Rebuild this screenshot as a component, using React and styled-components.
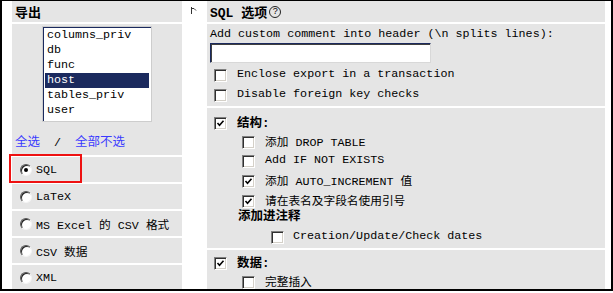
import styled, { createGlobalStyle } from "styled-components"

const Tables = ["columns_priv", "db", "func", "host", "tables_priv", "user"]
const Formats = [
  { label: "SQL", checked: true, highlighted: true },
  { label: "LaTeX" },
  { label: "MS Excel 的 CSV 格式" },
  { label: "CSV 数据" },
  { label: "XML" },
]

const GlobalStyle = createGlobalStyle`
  body {
    margin: 0;
    background: #fff;
  }
`

function Checkbox({ checked }) {
  return (
    <Box>
      {checked && (
        <svg width="9" height="9" viewBox="0 0 9 9">
          <path d="M1.5 4 L3.5 6.2 L7.5 1.8" fill="none" stroke="#000" strokeWidth="1.6" />
        </svg>
      )}
    </Box>
  )
}

function CheckRow({ label, checked, indent = 7, gap = 10, height = 19, bold }) {
  return (
    <Row $indent={indent} $gap={gap} $height={height} $bold={bold}>
      <Checkbox checked={checked} />
      <span>{label}</span>
    </Row>
  )
}

export default function App() {
  return (
    <>
      <GlobalStyle />
      <Frame>
        <LeftCol>
          <Header>导出</Header>
          <ExportBox>
            <TableList>
              {Tables.map((name) => (
                <ListItem key={name} $selected={name === "host"}>{name}</ListItem>
              ))}
            </TableList>
            <Links>
              <a>全选</a>{"  /  "}<a>全部不选</a>
            </Links>
          </ExportBox>
          {Formats.map((f) => (
            <FormatRow key={f.label} $highlighted={f.highlighted}>
              <Radio $checked={f.checked} />
              <span>{f.label}</span>
            </FormatRow>
          ))}
        </LeftCol>

        <Marker>
          <svg width="8" height="8" viewBox="0 0 8 8">
            <path d="M1.5 0 V7 M1.5 1.5 H4 L6 3.5" fill="none" stroke="#333" strokeWidth="1" />
          </svg>
        </Marker>

        <OptionsCol>
          <Header>
            SQL 选项<Help>?</Help>
          </Header>
          <Section $pad="2px 0 2px">
            <CommentLabel>Add custom comment into header (\n splits lines):</CommentLabel>
            <CommentInput type="text" />
            <CheckRow label="Enclose export in a transaction" height={20} />
            <CheckRow label="Disable foreign key checks" height={20} />
          </Section>
          <Section $pad="4px 0 2px">
            <CheckRow label="结构:" checked bold />
            <CheckRow label="添加 DROP TABLE" indent={35} />
            <CheckRow label="Add IF NOT EXISTS" indent={35} height={20} />
            <CheckRow label="添加 AUTO_INCREMENT 值" indent={35} height={20} checked />
            <CheckRow label="请在表名及字段名使用引号" indent={35} checked />
            <SubHeading>添加进注释</SubHeading>
            <CheckRow label="Creation/Update/Check dates" indent={64} gap={9} height={20} />
          </Section>
          <Section $pad="2px 0 0">
            <CheckRow label="数据:" checked bold />
            <CheckRow label="完整插入" indent={35} />
          </Section>
        </OptionsCol>
      </Frame>
    </>
  )
}

const Frame = styled.div`
  box-sizing: border-box;
  width: 613px;
  height: 291px;
  border: 2px solid #000;
  border-top-width: 1px;
  padding: 0 6px 0 10px;
  overflow: hidden;
  display: flex;
  align-items: flex-start;
  background: #fff;
  color: #000;
  font-family: "Liberation Mono", "Noto Sans CJK SC", monospace;
  font-size: 11.7px;
`

const LeftCol = styled.div`
  width: 170px;
  flex: none;
  display: flex;
  flex-direction: column;
  gap: 2px;
`

const Header = styled.div`
  height: 21px;
  background: #e5e5e5;
  display: flex;
  align-items: center;
  padding-left: 3px;
  font-size: 13px;
  font-weight: bold;
  white-space: pre;
`

const Help = styled.span`
  margin-left: 2px;
  width: 10px;
  height: 10px;
  border: 1px solid #222;
  border-radius: 50%;
  display: inline-flex;
  align-items: center;
  justify-content: center;
  font-family: "Liberation Sans", sans-serif;
  font-size: 9px;
  font-weight: normal;
  line-height: 1;
`

const ExportBox = styled.div`
  background: #e5e5e5;
  padding: 2px 0 4px;
  display: flex;
  flex-direction: column;
  align-items: center;
`

const TableList = styled.ul`
  box-sizing: border-box;
  list-style: none;
  margin: 0;
  width: 110px;
  height: 96px;
  padding: 1px 2px 3px;
  background: #fff;
  border: 1px solid #cdcdcd;
  box-shadow: inset 1px 1px 0 #1b2a5e;
`

const ListItem = styled.li`
  height: 15px;
  line-height: 15px;
  padding-left: 2px;
  background: ${(p) => (p.$selected ? "#1b2a5e" : "transparent")};
  color: ${(p) => (p.$selected ? "#fff" : "#000")};
`

const Links = styled.div`
  align-self: stretch;
  margin-top: 13px;
  padding-left: 3px;
  height: 16px;
  line-height: 16px;
  white-space: pre;

  a {
    color: #3b3bff;
    font-size: 12.5px;
  }
`

const FormatRow = styled.div`
  position: relative;
  height: 25px;
  background: #e5e5e5;
  display: flex;
  align-items: center;
  gap: 4px;
  padding-left: 8px;

  &::after {
    content: "";
    display: ${(p) => (p.$highlighted ? "block" : "none")};
    position: absolute;
    left: -3px;
    top: -3px;
    width: 69px;
    height: 25px;
    border: 2px solid #ee1111;
  }
`

const Radio = styled.span`
  box-sizing: border-box;
  width: 12px;
  height: 12px;
  border-radius: 50%;
  background: #fff;
  border: 1px solid;
  border-color: #555 #f4f4f4 #f4f4f4 #555;
  box-shadow: inset 1px 1px 0 #222;
  position: relative;

  &::after {
    content: "";
    display: ${(p) => (p.$checked ? "block" : "none")};
    position: absolute;
    left: 3px;
    top: 3px;
    width: 4px;
    height: 4px;
    border-radius: 50%;
    background: #000;
  }
`

const Marker = styled.div`
  width: 25px;
  flex: none;
  padding: 4px 0 0 8px;
  box-sizing: border-box;
`

const OptionsCol = styled.div`
  flex: 1;
  display: flex;
  flex-direction: column;
  gap: 2px;
`

const Section = styled.div`
  background: #e5e5e5;
  padding: ${(p) => p.$pad};
  display: flex;
  flex-direction: column;
`

const CommentLabel = styled.div`
  height: 17px;
  line-height: 17px;
  padding-left: 3px;
  white-space: pre;
`

const CommentInput = styled.input`
  box-sizing: border-box;
  margin: 0 0 1px 3px;
  width: 221px;
  height: 20px;
  background: #fff;
  border: 1px solid;
  border-color: #1b2a5e #d8d8d8 #d8d8d8 #1b2a5e;
  box-shadow: inset 1px 1px 0 #404040;
  outline: none;
`

const Row = styled.div`
  flex: none;
  height: ${(p) => p.$height}px;
  display: flex;
  align-items: center;
  gap: ${(p) => p.$gap}px;
  padding-left: ${(p) => p.$indent}px;
  font-weight: ${(p) => (p.$bold ? "bold" : "normal")};
  font-size: ${(p) => (p.$bold ? "12.5px" : "inherit")};
  white-space: pre;
`

const Box = styled.span`
  box-sizing: border-box;
  width: 13px;
  height: 13px;
  flex: none;
  margin-top: 3px;
  background: #fff;
  border: 1px solid;
  border-color: #808080 #fff #fff #808080;
  box-shadow: inset 1px 1px 0 #303030, inset -1px -1px 0 #d4d0c8;
  display: flex;
  align-items: center;
  justify-content: center;
`

const SubHeading = styled.div`
  flex: none;
  height: 17px;
  line-height: 17px;
  padding-left: 31px;
  font-weight: bold;
  font-size: 12.5px;
`
